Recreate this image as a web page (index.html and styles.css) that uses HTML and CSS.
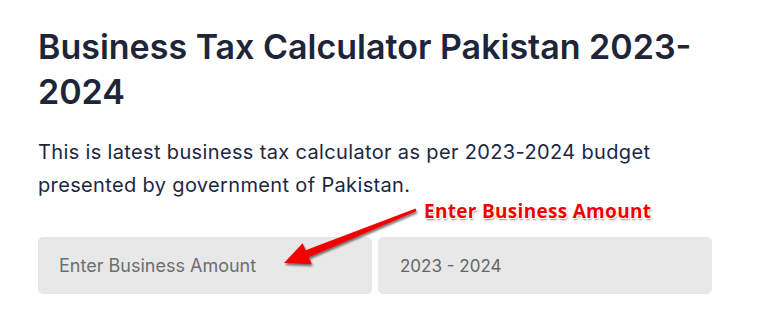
FILE: index.html
```html
<!DOCTYPE html>
<html lang="en">
<head>
    <meta charset="UTF-8">
    <meta name="viewport" content="width=device-width, initial-scale=1.0">
    <title>Business Tax Calculator Pakistan</title>
    <link rel="stylesheet" href="styles.css">
</head>
<body>
    <div class="calculator">
        <h1>Business Tax Calculator Pakistan 2023-2024</h1>
        <p class="intro">This is latest business tax calculator as per 2023-2024 budget presented by government of Pakistan.</p>

        <div class="fields">
            <input class="field" type="text" placeholder="Enter Business Amount">
            <input class="field year" type="text" value="2023 - 2024" readonly>
        </div>
    </div>

    <!-- annotation over the screenshot -->
    <div class="note">Enter Business Amount</div>
    <svg class="arrow" width="773" height="329" viewBox="0 0 773 329">
        <defs>
            <filter id="shadow" x="-20%" y="-20%" width="140%" height="160%">
                <feDropShadow dx="1" dy="2" stdDeviation="1.2" flood-color="#000" flood-opacity="0.55"/>
            </filter>
        </defs>
        <polygon filter="url(#shadow)" fill="#f20000"
            points="415.6,208.6 305.6,250.2 302.6,243.2 284,263 311.8,264.2 308.8,257.2 416.4,211.2"/>
    </svg>
</body>
</html>
```

FILE: styles.css
```css
body {
    margin: 0;
    background: #fff;
    font-family: Inter, "Noto Sans", sans-serif;
}
.calculator {
    width: 674px;
    padding: 24px 0 0 38px;
}
h1 {
    margin: 0;
    font-size: 34px;
    line-height: 45px;
    font-weight: 600;
    color: #1e2538;
}
.intro {
    margin: 22px 0 0;
    font-size: 20px;
    line-height: 33px;
    letter-spacing: 0.35px;
    color: #1d2742;
    padding-right: 20px;
}
.fields {
    display: grid;
    grid-template-columns: 1fr 1fr;
    gap: 6px;
    margin-top: 35px;
}
.field {
    height: 57px;
    box-sizing: border-box;
    border: 1px solid #e3e6ea;
    border-radius: 5px;
    background: #e8e8e8;
    padding: 0 0 0 20px;
    font-family: Inter, "Noto Sans", sans-serif;
    font-size: 18px;
    color: #666;
    outline: none;
}
.field::placeholder {
    color: #6e6e6e;
}
.field.year {
    border-color: #e8e8e8;
    padding-left: 21px;
    font-size: 17px;
}
.note {
    position: absolute;
    left: 424px;
    top: 198px;
    font-family: "Open Sans", sans-serif;
    font-weight: 700;
    font-size: 19px;
    letter-spacing: 0.3px;
    color: #f20000;
    text-shadow: -1px -1px 0 #fff, 1px -1px 0 #fff, -1px 1px 0 #fff, 1px 1px 0 #fff, 1px 2px 2px #888;
}
.arrow {
    position: absolute;
    left: 0;
    top: 0;
    pointer-events: none;
}
```
